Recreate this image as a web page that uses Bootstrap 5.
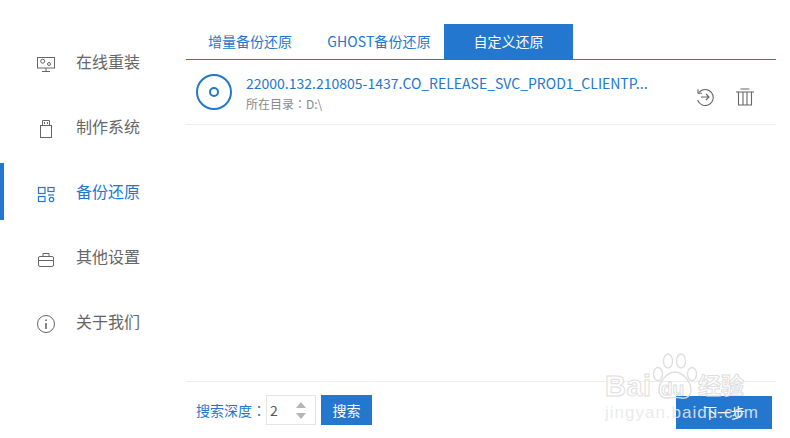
<!DOCTYPE html>
<html lang="en">
<head>
  <meta charset="UTF-8" />
  <title>备份还原</title>
  <link href="https://cdn.jsdelivr.net/npm/bootstrap@5.3.2/dist/css/bootstrap.min.css" rel="stylesheet">
  <style>
    html, body { height: 438px; overflow: hidden; }
    body {
      background: #fff;
      font-family: "Noto Sans CJK SC", "Liberation Sans", sans-serif;
      font-size: 14px;
      color: #666;
    }
    .app-shell { width: 790px; height: 438px; position: relative; }
    .mid-colon { font-family: "Noto Sans CJK TC", sans-serif; }

    /* sidebar */
    .side-nav { width: 186px; padding-top: 30px; }
    .side-item {
      height: 65px; display: flex; align-items: center;
      padding-left: 36px; font-size: 16px; color: #666;
      position: relative; text-decoration: none;
    }
    .side-item svg { width: 20px; height: 20px; margin-right: 20px; flex: none; }
    .side-text { margin-bottom: 3px; }
    .side-item.is-active { color: #2377cf; }
    .side-item.is-active::before {
      content: ""; position: absolute; left: 0; top: 3px; width: 4px; height: 57px; background: #2377cf;
    }

    /* main column */
    .main-col { width: 590px; height: 438px; }
    .tab-row { margin-top: 24px; height: 36px; border-bottom: 1px solid #2377cf; }
    .tab-link {
      height: 35px; display: flex; align-items: center; justify-content: center;
      font-size: 14px; color: #2377cf; text-decoration: none;
    }
    .tab-one { width: 128px; }
    .tab-two { width: 130px; letter-spacing: .1px; }
    .tab-three { width: 129px; background: #2377cf; color: #fff; }

    .file-row { height: 65px; border-bottom: 1px solid #eee; padding-left: 10px; }
    .file-disc { width: 36px; height: 36px; flex: none; margin-right: 14px; }
    .file-name { font-size: 14px; color: #2377cf; line-height: 18px; margin-top: 3px; white-space: nowrap; }
    .file-dir { font-size: 12px; color: #888; line-height: 18px; margin-top: 3px; }
    .row-tools { margin-left: auto; margin-right: 21px; margin-top: 8px; gap: 20px; }
    .row-tools svg { width: 20px; height: 20px; display: block; }

    .foot-row { height: 57px; border-top: 1px solid #eee; margin-top: auto; padding-left: 10px; position: relative; }
    .foot-label { font-size: 14px; color: #2377cf; }
    .depth-box {
      width: 50px; height: 30px; border: 1px solid #e4e4e4; padding-left: 3px;
      font-size: 14px; color: #555; position: relative; display: flex; align-items: center;
    }
    .depth-up, .depth-down {
      position: absolute; right: 9px; width: 0; height: 0;
      border-left: 5px solid transparent; border-right: 5px solid transparent;
    }
    .depth-up { top: 6px; border-bottom: 6px solid #b5b5b5; }
    .depth-down { bottom: 5px; border-top: 6px solid #b5b5b5; }
    .search-btn {
      width: 51px; height: 30px; margin-left: 5px; padding: 0; border: 0; border-radius: 0;
      background: #2377cf; color: #fff; font-size: 14px;
    }
    .next-btn {
      position: absolute; left: 490px; top: 14px; width: 96px; height: 33px; padding: 0;
      border: 0; border-radius: 0; background: #2377cf; color: #fff; font-size: 14px;
    }

    /* watermark lies over the page */
    .wm-box { position: absolute; left: 604px; top: 352px; width: 180px; height: 86px; pointer-events: none; }
    .wm-paw { position: absolute; left: 48px; top: 0; width: 46px; height: 50px; }
    .wm-bai, .wm-du, .wm-cn, .wm-jing { position: absolute; white-space: nowrap; }
    .wm-bai, .wm-du { font-family: "Liberation Sans", sans-serif; font-weight: 700; color: #fff; -webkit-text-stroke: 1px #dedede; }
    .wm-bai { left: 1px; top: 19px; font-size: 29px; line-height: 30px; letter-spacing: .5px; }
    .wm-du { left: 57px; top: 26px; font-size: 19px; line-height: 22px; color: #fff; }
    .wm-cn { left: 94px; top: 19px; font-size: 23px; line-height: 26px; font-weight: 700; color: #fff; -webkit-text-stroke: 1px #dedede; }
    .wm-jing { left: 1px; top: 51px; font-family: "Liberation Sans", sans-serif; font-size: 17px; line-height: 19px; letter-spacing: 1px; color: rgba(232,232,232,.9); }
  </style>
</head>
<body>
<div class="app-shell d-flex">

  <div class="side-nav">
    <a class="side-item" href="#">
      <svg viewBox="0 0 20 20" fill="none" stroke="#666" stroke-width="1"><rect x="1.5" y="4.5" width="17" height="10.5"/><circle cx="6.7" cy="8.2" r="2"/><circle cx="13" cy="11" r="1.5"/><path d="M10 15v3M6 18.5h8"/></svg>
      <span class="side-text">在线重装</span>
    </a>
    <a class="side-item" href="#">
      <svg viewBox="0 0 20 20" fill="none" stroke="#666" stroke-width="1"><rect x="4.5" y="7.5" width="11" height="12"/><path d="M6.5 7.5v-5h7v5M8.5 4v2M11.5 4v2"/></svg>
      <span class="side-text">制作系统</span>
    </a>
    <a class="side-item is-active" href="#">
      <svg viewBox="0 0 20 20" fill="none" stroke="#2377cf" stroke-width="1.2"><rect x="2.5" y="4.5" width="6.5" height="6"/><rect x="12" y="4.5" width="6" height="4"/><rect x="2.5" y="13.5" width="6.5" height="5"/><path d="M12 12h6"/><circle cx="15.5" cy="16.5" r="2.2"/></svg>
      <span class="side-text">备份还原</span>
    </a>
    <a class="side-item" href="#">
      <svg viewBox="0 0 20 20" fill="none" stroke="#666" stroke-width="1"><rect x="2.5" y="8.5" width="15" height="10" rx="1.5"/><path d="M2.5 12.5h15M7 8.5V5.5h6v3"/></svg>
      <span class="side-text">其他设置</span>
    </a>
    <a class="side-item" href="#">
      <svg viewBox="0 0 20 20" fill="none" stroke="#666" stroke-width="1"><circle cx="10" cy="11" r="8.5"/><path d="M10 10v6" stroke-width="1.6"/><path d="M10 6.5v1.6" stroke-width="1.6"/></svg>
      <span class="side-text">关于我们</span>
    </a>
  </div>

  <div class="main-col d-flex flex-column">
    <div class="tab-row d-flex">
      <a class="tab-link tab-one" href="#">增量备份还原</a>
      <a class="tab-link tab-two" href="#">GHOST备份还原</a>
      <a class="tab-link tab-three" href="#">自定义还原</a>
    </div>

    <div class="file-row d-flex align-items-center">
      <svg class="file-disc" viewBox="0 0 36 36" fill="none" stroke="#2377cf"><circle cx="18" cy="18" r="17" stroke-width="2"/><circle cx="18" cy="18" r="4" stroke-width="2"/></svg>
      <div>
        <div class="file-name">22000.132.210805-1437.CO_RELEASE_SVC_PROD1_CLIENTP...</div>
        <div class="file-dir">所在目录<span class="mid-colon">：</span>D:\</div>
      </div>
      <div class="row-tools d-flex">
        <svg viewBox="0 -1 20 20" fill="none" stroke="#666" stroke-width="1.1"><path d="M4 5.5A8 8 0 1 1 2.6 13"/><path d="M3 2.2v4h4M6 10h8M11 7l3 3-3 3"/></svg>
        <svg viewBox="0 0 20 20" fill="none" stroke="#666" stroke-width="1.1"><path d="M1 6h18M5.5 3h9M3.5 6v13h13V6M8 6v13M12 6v13"/></svg>
      </div>
    </div>

    <div class="foot-row d-flex align-items-center">
      <span class="foot-label">搜索深度<span class="mid-colon">：</span></span>
      <div class="depth-box">2<span class="depth-up"></span><span class="depth-down"></span></div>
      <button class="btn search-btn" type="button">搜索</button>
      <button class="btn next-btn" type="button">下一步</button>
    </div>
  </div>

  <div class="wm-box">
    <svg class="wm-paw" viewBox="0 0 46 50" fill="none" stroke="#dedede" stroke-width="1.3"><ellipse cx="6" cy="22" rx="4.5" ry="6.5"/><ellipse cx="16" cy="9" rx="4.5" ry="7"/><ellipse cx="29" cy="9" rx="4.5" ry="7"/><ellipse cx="40" cy="22" rx="4.5" ry="6.5"/><path d="M23 20c-8 0-16 10-16 18 0 6 5 9 9 8 5-1 9-1 14 0 4 1 9-2 9-8 0-8-8-18-16-18z"/></svg>
    <div class="wm-bai">Bai</div>
    <div class="wm-du">du</div>
    <div class="wm-cn">经验</div>
    <div class="wm-jing">jingyan.baidu.com</div>
  </div>

</div>
</body>
</html>
